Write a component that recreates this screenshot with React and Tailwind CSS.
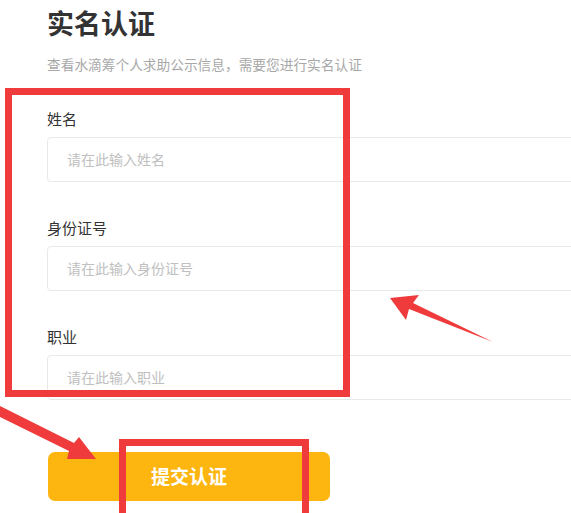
import React from 'react';

const fields = [
  { label: '姓名', placeholder: '请在此输入姓名' },
  { label: '身份证号', placeholder: '请在此输入身份证号' },
  { label: '职业', placeholder: '请在此输入职业' },
];

const Field = ({ label, placeholder, first }) => (
  <div className={first ? 'mt-[34px]' : 'mt-[35px]'}>
    <div className="text-[15px] leading-[22px] text-[#333]">{label}</div>
    <div className="mt-[7px] h-[45px] w-[560px] rounded-l-[4px] border border-[#e9e9e9] bg-white pl-[19px] flex items-center">
      <span className="text-[14px] text-[#c0c0c0]">{placeholder}</span>
    </div>
  </div>
);

export default function App() {
  return (
    <div
      className="relative w-[571px] h-[513px] overflow-hidden bg-white"
      style={{ fontFamily: '"Noto Sans CJK SC", "Noto Sans", sans-serif' }}
    >
      <div className="pl-[47px] pt-[4px]">
        <h1 className="text-[27px] leading-[38px] font-bold text-[#333]">实名认证</h1>
        <p className="mt-[12px] text-[13.7px] leading-[20px] text-[#a8a8a8]">
          查看水滴筹个人求助公示信息，需要您进行实名认证
        </p>
        {fields.map((f, i) => (
          <Field key={f.label} {...f} first={i === 0} />
        ))}
        <button className="mt-[52px] ml-px h-[49px] w-[282px] rounded-[7px] bg-[#fdb50f] text-white text-[19px] font-bold flex items-center justify-center">
          提交认证
        </button>
      </div>

      {/* annotations */}
      <div className="absolute left-[5px] top-[88px] w-[345px] h-[309px] border-[7px] border-[#ef3b3b]" />
      <div className="absolute left-[119px] top-[439px] w-[190px] h-[90px] border-[7px] border-[#ef3b3b]" />
      <svg className="absolute left-0 top-0" width="571" height="513" viewBox="0 0 571 513">
        <polygon points="390,298 419,295 413,303 493,342 409,309 406,320" fill="#ef3b3b" />
        <polygon points="0,406 74,443 79,437 96,459 67,459 69,451 0,417" fill="#ef3b3b" />
      </svg>
    </div>
  );
}
